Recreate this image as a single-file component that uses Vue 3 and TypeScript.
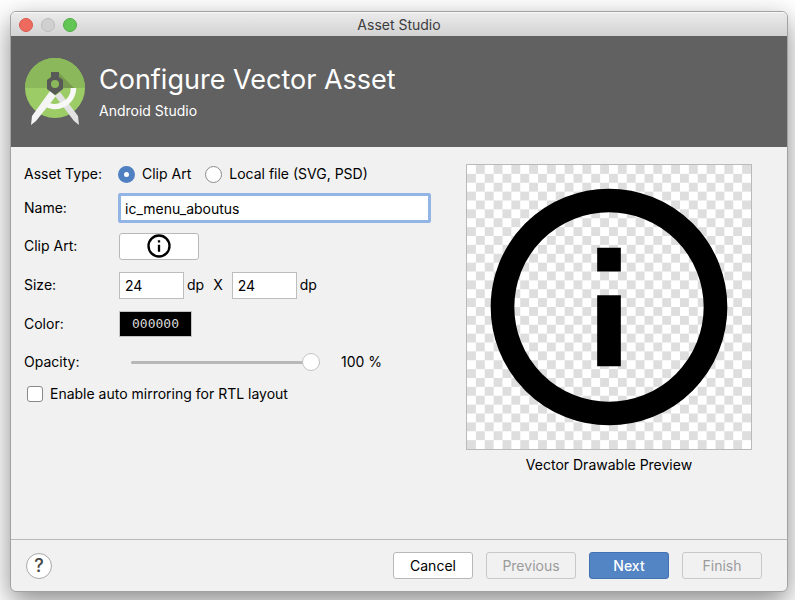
<script setup lang="ts">
import { ref } from 'vue'

const assetType = ref<'clip' | 'local'>('clip')
const name = ref('ic_menu_aboutus')
const width = ref('24')
const height = ref('24')
const color = ref('000000')
const opacity = ref(100)
const mirroring = ref(false)
</script>

<template>
  <div class="desktop">
    <div class="window">
      <div class="titlebar">
        <div class="lights">
          <button class="light red" aria-label="Close"></button>
          <button class="light gray" aria-label="Minimize"></button>
          <button class="light green" aria-label="Zoom"></button>
        </div>
        <span class="window-title">Asset Studio</span>
      </div>

      <header class="banner">
        <svg class="logo" viewBox="0 0 60 68" aria-hidden="true">
          <circle cx="30" cy="30" r="30" fill="#9ccc65" />
          <path d="M0 30a30 30 0 0 1 60 0z" fill="#8bb85b" />
          <path d="M34 15L49 30H36z" fill="#76994f" />
          <path d="M35 34L30 38 49 63 54 67 53 58z" fill="#e2e2e2" />
          <path d="M48.500 30A18.500 18.500 0 0 1 18 44" fill="none" stroke="#f8f8f8" stroke-width="5.500" />
          <path d="M25 33L31 38 11 63 6 67 7 58z" fill="#f5f5f5" />
          <path
            d="M26 14h8v5l4 3v9l-8 6-8-6v-9l4-3zM30 22a4 4 0 1 0 0 8 4 4 0 1 0 0-8z"
            fill="#585a58"
            fill-rule="evenodd"
          />
        </svg>
        <div>
          <h1>Configure Vector Asset</h1>
          <p>Android Studio</p>
        </div>
      </header>

      <main class="content">
        <form id="asset-form" class="form" @submit.prevent>
          <div class="row short">
            <span class="label">Asset Type:</span>
            <label class="choice"><input v-model="assetType" type="radio" name="type" value="clip" />Clip Art</label>
            <label class="choice"><input v-model="assetType" type="radio" name="type" value="local" />Local file (SVG, PSD)</label>
          </div>
          <div class="row">
            <label class="label" for="name">Name:</label>
            <input id="name" v-model="name" class="text name" type="text" />
          </div>
          <div class="row">
            <label class="label" for="clip">Clip Art:</label>
            <button id="clip" class="button inset" type="button" aria-label="Info icon">
              <svg class="clip-icon" viewBox="0 0 24 24">
                <circle cx="12" cy="12" r="9" fill="none" stroke="#000" stroke-width="2" />
                <path d="M11 7h2v2h-2zM11 11h2v6h-2z" />
              </svg>
            </button>
          </div>
          <div class="row tall">
            <label class="label" for="width">Size:</label>
            <input id="width" v-model="width" class="text size inset" type="text" />
            <span class="unit">dp</span>
            <span class="times">X</span>
            <input id="height" v-model="height" class="text size" type="text" aria-label="Height" />
            <span class="unit">dp</span>
          </div>
          <div class="row">
            <label class="label" for="color">Color:</label>
            <button id="color" class="swatch inset" type="button">{{ color }}</button>
          </div>
          <div class="row">
            <label class="label" for="opacity">Opacity:</label>
            <input id="opacity" v-model="opacity" class="slider" type="range" min="0" max="100" />
            <output for="opacity">{{ opacity }} %</output>
          </div>
          <div class="row last">
            <label class="choice"><input v-model="mirroring" type="checkbox" />Enable auto mirroring for RTL layout</label>
          </div>
        </form>

        <figure class="preview">
          <div class="canvas">
            <svg viewBox="0 0 24 24">
              <circle cx="12" cy="12" r="9" fill="none" stroke="#000" stroke-width="2" />
              <path d="M11 7h2v2h-2zM11 11h2v6h-2z" />
            </svg>
          </div>
          <figcaption>Vector Drawable Preview</figcaption>
        </figure>
      </main>

      <footer class="footer">
        <button class="help" type="button">?</button>
        <div class="actions">
          <button class="button" type="button">Cancel</button>
          <button class="button wide" type="button" disabled>Previous</button>
          <button class="button primary" type="submit" form="asset-form">Next</button>
          <button class="button" type="button" disabled>Finish</button>
        </div>
      </footer>
    </div>
  </div>
</template>

<style>
body {
  background: #fff;
}
</style>

<style scoped>
* {
  box-sizing: border-box;
}

.desktop {
  display: flex;
  min-height: 100vh;
  padding: 11px 7px 8px 10px;
  overflow: hidden;
  font-family: Inter, "Liberation Sans", sans-serif;
  font-size: 14px;
  line-height: 20px;
  color: #000;
}

button,
input {
  margin: 0;
  font: inherit;
  color: inherit;
}

.window {
  display: flex;
  flex: 1;
  flex-direction: column;
  overflow: hidden;
  background: #f1f1f1;
  border: 1px solid #a2a2a2;
  border-radius: 6px;
  box-shadow: 0 10px 28px rgba(0, 0, 0, 0.46);
}

.titlebar {
  display: grid;
  grid-template-columns: 1fr auto 1fr;
  align-items: center;
  height: 24px;
  padding: 0 8px;
  background: linear-gradient(#ebebeb, #d2d2d2);
  border-top: 1px solid #f8f8f8;
}

.lights {
  display: flex;
  gap: 8px;
}

.light {
  width: 14px;
  height: 14px;
  padding: 0;
  border: 1px solid;
  border-radius: 50%;
}

.red {
  background: #ee6a5f;
  border-color: #d9584e;
}

.gray {
  background: #d0d0d0;
  border-color: #bcbcbc;
}

.green {
  background: #62c655;
  border-color: #50ac44;
}

.window-title {
  color: #3c3c3c;
}

.banner {
  display: flex;
  gap: 14px;
  align-items: center;
  height: 111px;
  padding: 0 14px;
  color: #fff;
  background: #616161;
}

.logo {
  flex: none;
  width: 60px;
  height: 68px;
}

h1 {
  margin: 0;
  font-size: 27px;
  font-weight: 400;
  line-height: 36px;
}

p {
  margin: 3px 0 0;
}

.content {
  display: flex;
  flex: 1;
  gap: 35px;
  align-items: flex-start;
  padding: 12px 35px 12px 13px;
}

.form {
  flex: 1;
}

.row {
  display: flex;
  align-items: center;
  height: 38px;
}

.short {
  height: 30px;
}

.tall {
  height: 40px;
}

.last {
  height: 26px;
  padding-left: 3px;
}

.label {
  flex: none;
  width: 94px;
}

.inset {
  margin-left: 1px;
}

.choice {
  display: flex;
  gap: 7px;
  align-items: center;
  margin-right: 14px;
}

input[type='radio'] {
  width: 17px;
  height: 17px;
  appearance: none;
  background: #fff;
  border: 1px solid #8c8c8c;
  border-radius: 50%;
}

input[type='radio']:checked {
  border: 6px solid #4f80c2;
}

input[type='checkbox'] {
  width: 16px;
  height: 16px;
  appearance: none;
  background: #fff;
  border: 1px solid #8a8a8a;
  border-radius: 3px;
}

input[type='checkbox']:checked {
  background: #4f80c2;
}

.text {
  height: 27px;
  padding: 0 5px;
  background: #fff;
  border: 1px solid #bdbdbd;
  outline: none;
}

.name {
  flex: 1;
  min-width: 0;
  height: 30px;
  padding: 0 4px;
  border: 3px solid #93b5e6;
  border-radius: 2px;
}

.size {
  width: 65px;
}

.unit {
  margin-left: 3px;
}

.times {
  margin: 0 9px;
}

.button {
  display: flex;
  align-items: center;
  justify-content: center;
  width: 80px;
  height: 27px;
  padding: 0;
  background: #fff;
  border: 1px solid #b8b8b8;
  border-radius: 3px;
}

.button:disabled {
  color: #9b9b9b;
  background: #f1f1f1;
  border-color: #c8c8c8;
}

.wide {
  width: 90px;
}

.primary {
  font-weight: 500;
  color: #fff;
  background: #5384c4;
  border-color: #4371b3;
}

.clip-icon {
  width: 28px;
  height: 28px;
}

.swatch {
  width: 73px;
  height: 26px;
  padding: 0;
  font-family: "DejaVu Sans Mono", monospace;
  font-size: 13px;
  color: #d8d8d8;
  background: #000;
  border: 1px solid #c4c4c4;
}

.slider {
  width: 189px;
  height: 20px;
  margin: 0 21px 0 13px;
  appearance: none;
  background: transparent;
}

.slider::-webkit-slider-runnable-track {
  height: 3px;
  background: #b8b8b8;
  border-radius: 2px;
}

.slider::-webkit-slider-thumb {
  width: 18px;
  height: 18px;
  margin-top: -8px;
  appearance: none;
  background: #fff;
  border: 1px solid #c4c4c4;
  border-radius: 50%;
}

.preview {
  width: 286px;
  margin: 5px 0 0;
  text-align: center;
}

.canvas {
  display: flex;
  background: repeating-conic-gradient(#dedede 0 25%, #fff 0 50%) 0 0 / 6.25% 6.25%;
  border: 1px solid #bababa;
}

.canvas svg {
  width: 100%;
}

figcaption {
  margin-top: 5px;
}

.footer {
  display: flex;
  align-items: center;
  justify-content: space-between;
  height: 52px;
  padding: 0 25px 0 15px;
  border-top: 1px solid #b9b9b9;
}

.help {
  width: 26px;
  height: 26px;
  padding: 0;
  font-size: 18px;
  font-weight: 500;
  color: #444;
  background: #fff;
  border: 1px solid #a8a8a8;
  border-radius: 50%;
}

.actions {
  display: flex;
  gap: 13px;
}
</style>
